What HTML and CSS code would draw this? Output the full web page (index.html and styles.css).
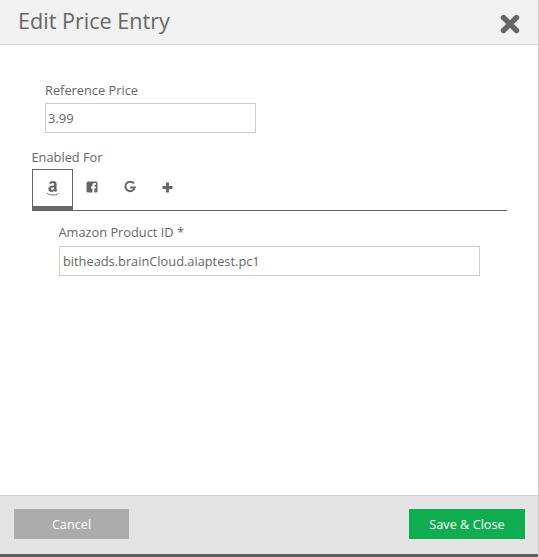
FILE: index.html
```html
<!DOCTYPE html>
<html lang="en">
<head>
<meta charset="utf-8">
<title>Edit Price Entry</title>
<link rel="stylesheet" href="styles.css">
</head>
<body>
<div class="dialog">
  <header class="head">
    <h1>Edit Price Entry</h1>
    <svg class="close" width="20" height="20" viewBox="0 0 20 20"><path d="M3.5 3.5 L16.5 16.5 M16.5 3.5 L3.5 16.5" stroke="#666" stroke-width="5.4" stroke-linecap="round" fill="none"/></svg>
  </header>
  <main class="body">
    <div class="field price">
      <label>Reference Price</label>
      <input class="input price-input" type="text" value="3.99">
    </div>
    <div class="enabled-label">Enabled For</div>
    <div class="tabs">
      <div class="tab active">
        <svg width="14" height="17" viewBox="0 0 14 17"><path d="M3 3.6 C3.4 1.7 5 1 6.9 1 C9.2 1 10.6 2 10.6 4.2 L10.6 9 C10.6 9.8 10.8 10.2 11.3 10.6 L9.5 11.9 L8.3 10.7 C7.5 11.5 6.6 11.9 5.4 11.9 C3.6 11.9 2.3 10.8 2.3 9 C2.3 6.7 4.5 5.7 7.9 5.6 L7.9 4.6 C7.9 3.4 7.5 3 6.7 3 C6 3 5.5 3.4 5.3 4.1 Z M7.9 7.2 C6 7.3 5 7.8 5 8.8 C5 9.5 5.4 9.9 6.1 9.9 C7 9.9 7.9 9.2 7.9 8.2 Z" fill="#666"/><path d="M1 13.2 C4 15.6 9.5 15.7 12.6 13.4" stroke="#777" stroke-width="1" fill="none"/></svg>
      </div>
      <div class="tab">
        <svg width="12" height="12" viewBox="0 0 12 12"><path d="M2 0.5 H10 A1.5 1.5 0 0 1 11.5 2 V10 A1.5 1.5 0 0 1 10 11.5 H8.4 V7.4 H9.9 L10.1 5.6 H8.4 V4.6 C8.4 4 8.6 3.7 9.2 3.7 H10.1 V2.1 H8.6 C7.1 2.1 6.4 3 6.4 4.4 V5.6 H5 V7.4 H6.4 V11.5 H2 A1.5 1.5 0 0 1 0.5 10 V2 A1.5 1.5 0 0 1 2 0.5 Z" fill="#666"/></svg>
      </div>
      <div class="tab">
        <svg width="12" height="12" viewBox="0 0 12 12"><path d="M9.9 2.5 A4.7 4.7 0 1 0 10.8 6.4 H6.2" stroke="#666" stroke-width="2" fill="none"/></svg>
      </div>
      <div class="tab narrow">
        <svg width="11" height="11" viewBox="0 0 11 11"><path d="M5.5 0.5 V10.5 M0.5 5.5 H10.5" stroke="#666" stroke-width="3" fill="none"/></svg>
      </div>
    </div>
    <div class="field product">
      <label>Amazon Product ID *</label>
      <input class="input product-input" type="text" value="bitheads.brainCloud.aiaptest.pc1">
    </div>
  </main>
  <footer class="foot">
    <button class="btn cancel" type="button">Cancel</button>
    <button class="btn save" type="button">Save &amp; Close</button>
  </footer>
  <div class="strip"></div>
</div>
</body>
</html>
```

FILE: styles.css
```css
html, body {
  margin: 0;
  padding: 0;
  height: 100%;
  background: #fff;
}
.dialog {
  box-sizing: border-box;
  width: 539px;
  height: 557px;
  display: flex;
  flex-direction: column;
  border-right: 1px solid #ccc;
  font-family: "Open Sans", sans-serif;
  color: #666;
  overflow: hidden;
}
.head {
  box-sizing: border-box;
  height: 45px;
  flex: none;
  background: #f1f1f1;
  border-bottom: 1px solid #d4d4d4;
  display: flex;
  align-items: center;
  justify-content: space-between;
  padding: 0 18px;
}
.head h1 {
  margin: 0 0 2px;
  font-size: 21.6px;
  font-weight: 400;
  color: #666;
  line-height: 40px;
}
.close {
  margin-top: 3px;
}
.body {
  flex: 1;
  display: flex;
  flex-direction: column;
  padding-top: 37px;
  background: #fff;
}
.field label {
  display: block;
  font-size: 12.8px;
  line-height: 17px;
  color: #666;
}
.input {
  display: block;
  box-sizing: border-box;
  height: 30px;
  border: 1px solid #ccc;
  border-radius: 0;
  outline: none;
  padding: 0 2px;
  background: #fff;
  font-family: "Open Sans", sans-serif;
  font-size: 13px;
  color: #666;
}
.price {
  margin-left: 45px;
}
.price label {
  margin-bottom: 4px;
}
.price-input {
  width: 211px;
}
.enabled-label {
  margin: 16px 0 0 31.5px;
  font-size: 12.8px;
  line-height: 17px;
  color: #666;
}
.tabs {
  display: flex;
  width: 475px;
  height: 41px;
  margin: 3px 0 0 32px;
  border-bottom: 1px solid #666;
}
.tab {
  box-sizing: border-box;
  width: 38px;
  height: 41px;
  display: flex;
  align-items: center;
  justify-content: center;
  padding-bottom: 5px;
}
.tab.active {
  width: 41px;
  border: 1px solid #666;
  border-bottom: 4px solid #666;
  padding-bottom: 0;
}
.tab.narrow {
  width: 36px;
}
.product {
  margin: 13px 0 0 58.5px;
}
.product label {
  font-size: 12.8px;
  margin-bottom: 5px;
}
.product-input {
  width: 421px;
  margin-left: 0.5px;
  padding: 0 3px;
  font-size: 12.8px;
}
.foot {
  box-sizing: border-box;
  height: 59px;
  flex: none;
  background: #e4e4e4;
  border-top: 1px solid #d0d0d0;
  display: flex;
  align-items: flex-start;
  justify-content: space-between;
  padding: 13px 13px 0 14px;
}
.btn {
  height: 30px;
  border: 0;
  border-radius: 0;
  padding: 0;
  font-family: "Open Sans", sans-serif;
  font-size: 12.7px;
  color: #fff;
}
.cancel {
  width: 115px;
  background: #ababab;
}
.save {
  width: 116px;
  background: #0fad50;
}
.strip {
  height: 3px;
  flex: none;
  background: #5f5f5f;
}
```
